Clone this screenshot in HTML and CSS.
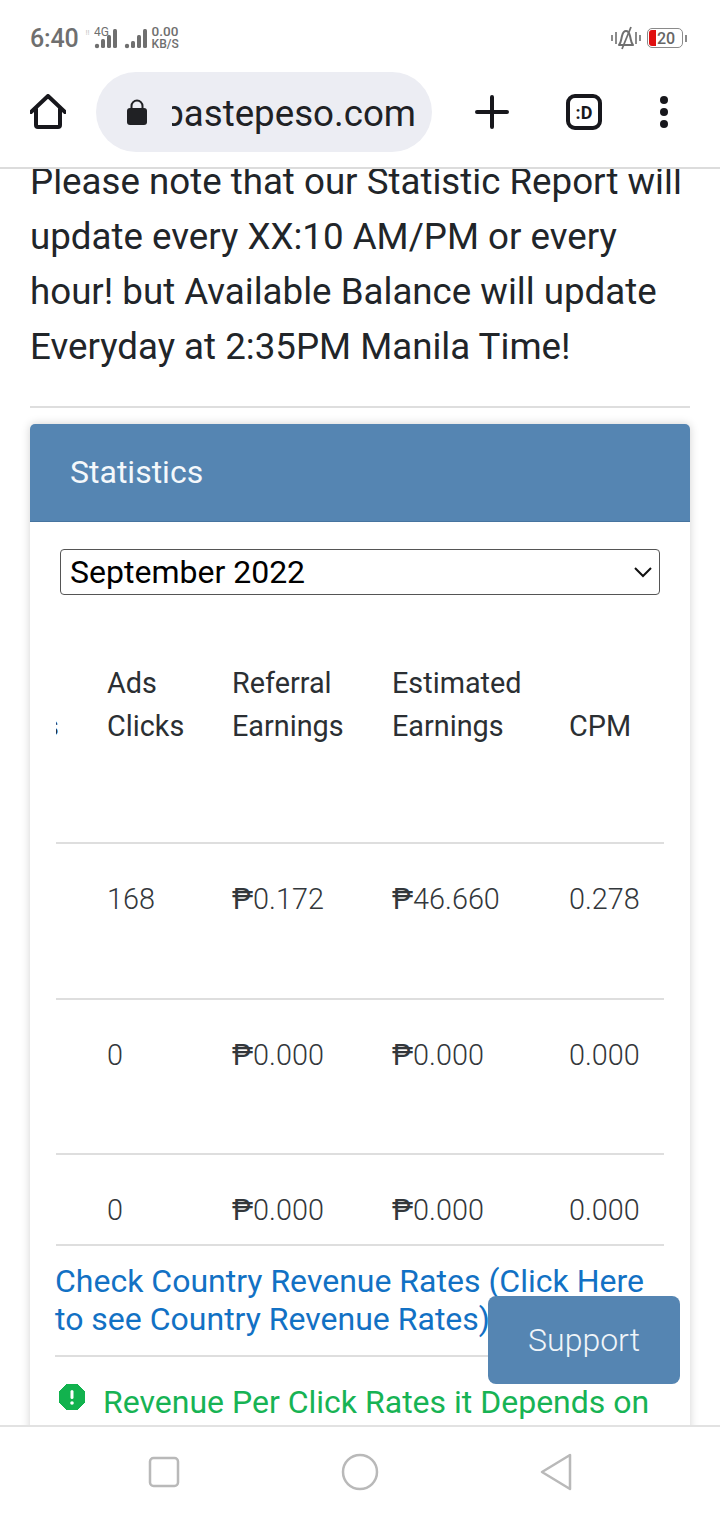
FILE: index.html
```html
<!DOCTYPE html>
<html lang="en">
<head>
<meta charset="UTF-8">
<title>Statistics</title>
<link rel="stylesheet" href="styles.css">
</head>
<body>
<div class="phone">
  <div class="status">
    <span class="time">6:40</span>
    <span class="volte">!!</span>
    <svg class="signal" width="55" height="24" viewBox="0 0 55 24">
      <text x="0" y="10" class="sig-label">4G</text>
      <g fill="#6f6f6f">
        <circle cx="3" cy="20" r="2.2"/>
        <rect x="7" y="13" width="4" height="9" rx="1.5"/>
        <rect x="13" y="9" width="4" height="13" rx="1.5"/>
        <rect x="19" y="3" width="4" height="19" rx="1.5"/>
        <circle cx="33" cy="20" r="2.2"/>
        <rect x="37" y="15" width="4" height="7" rx="1.5"/>
        <rect x="43" y="9" width="4" height="13" rx="1.5"/>
        <rect x="49" y="3" width="4" height="19" rx="1.5"/>
      </g>
    </svg>
    <span class="speed"><span>0.00</span><span class="speed-unit">KB/S</span></span>
    <span class="status-right">
      <svg width="30" height="24" viewBox="0 0 30 24" fill="none" stroke="#6f6f6f" stroke-width="2">
        <path d="M1 9v6M5 6v12M25 6v12M29 9v6" stroke-width="1.6"/>
        <path d="M8 19c2-2 2-5 3-9 .7-3 2.500-5 4-5s3.300 2 4 5c1 4 1 7 3 9z" stroke-linejoin="round"/>
        <path d="M20 1L11 23" stroke-width="1.8"/>
      </svg>
      <span class="battery"><span class="battery-fill"></span><span class="battery-num">20</span></span>
      <span class="battery-tip"></span>
    </span>
  </div>

  <div class="toolbar">
    <svg class="home" width="36" height="36" viewBox="0 0 36 36" fill="none" stroke="#17171c" stroke-width="4" stroke-linecap="round" stroke-linejoin="round">
      <path d="M1 18L18 2l17 16"/>
      <path d="M6 15v16a2 2 0 0 0 2 2h20a2 2 0 0 0 2-2V15"/>
    </svg>
    <div class="omnibox">
      <svg width="22" height="26" viewBox="0 0 22 26">
        <path d="M5.500 10V7a5.500 5.500 0 0 1 11 0v3" fill="none" stroke="#202124" stroke-width="2"/>
        <rect x="1" y="9" width="20" height="17" rx="3" fill="#202124"/>
      </svg>
      <div class="url"><span>pastepeso.com</span></div>
    </div>
    <svg class="plus" width="34" height="34" viewBox="0 0 34 34" stroke="#17171c" stroke-width="4" stroke-linecap="round">
      <path d="M17 2v30M2 17h30"/>
    </svg>
    <span class="tab-count">:D</span>
    <span class="dots"><i></i><i></i><i></i></span>
  </div>

  <main class="page">
    <p class="note">Please note that our Statistic Report will update every XX:10 AM/PM or every hour! but Available Balance will update Everyday at 2:35PM Manila Time!</p>
    <hr class="rule">
    <section class="card">
      <h2 class="card-head">Statistics</h2>
      <div class="card-body">
        <div class="month-box">
          <select class="month"><option>September 2022</option></select>
          <svg class="chevron" width="18" height="11" viewBox="0 0 18 11" fill="none" stroke="#111" stroke-width="2"><path d="M1 1l8 8 8-8"/></svg>
        </div>
        <div class="table-wrap">
          <table class="stats">
            <thead>
              <tr><th class="c0">Views</th><th class="c1">Ads Clicks</th><th class="c2">Referral Earnings</th><th class="c3">Estimated Earnings</th><th>CPM</th></tr>
            </thead>
            <tbody>
              <tr><td class="c0"></td><td>168</td><td><b>₱</b>0.172</td><td><b>₱</b>46.660</td><td>0.278</td></tr>
              <tr><td class="c0"></td><td>0</td><td><b>₱</b>0.000</td><td><b>₱</b>0.000</td><td>0.000</td></tr>
              <tr><td class="c0"></td><td>0</td><td><b>₱</b>0.000</td><td><b>₱</b>0.000</td><td>0.000</td></tr>
            </tbody>
          </table>
        </div>
        <a class="rates" href="#">Check Country Revenue Rates (Click Here to see Country Revenue Rates)</a>
        <div class="alert">
          <svg width="26" height="26" viewBox="0 0 26 26">
            <path d="M8 0h10l8 8v10l-8 8H8l-8-8V8z" fill="#12b24e" stroke="#12b24e" stroke-linejoin="round"/>
            <rect x="11.500" y="6" width="3" height="9" rx="1.500" fill="#fff"/>
            <circle cx="13" cy="19" r="1.800" fill="#fff"/>
          </svg>
          <span>Revenue Per Click Rates it Depends on</span>
        </div>
      </div>
    </section>
    <button class="support">Support</button>
  </main>

  <nav class="navbar">
    <svg width="32" height="32" viewBox="0 0 32 32" fill="none" stroke="#b9b9b9" stroke-width="2.500"><rect x="2" y="2" width="28" height="28" rx="3.500"/></svg>
    <svg width="38" height="38" viewBox="0 0 38 38" fill="none" stroke="#b9b9b9" stroke-width="2.500"><circle cx="19" cy="19" r="17"/></svg>
    <svg width="32" height="38" viewBox="0 0 32 38" fill="none" stroke="#b9b9b9" stroke-width="2.500" stroke-linejoin="round"><path d="M30 2v34L2 19z"/></svg>
  </nav>
</div>
</body>
</html>
```

FILE: styles.css
```css
* { box-sizing: border-box; }
html, body { margin: 0; padding: 0; }
body { font-family: Roboto, "Liberation Sans", sans-serif; background: #fff; color: #212529; }

.phone { width: 720px; height: 1520px; display: flex; flex-direction: column; overflow: hidden; }

/* status bar */
.status { height: 72px; flex: none; display: flex; align-items: center; padding: 4px 33px 0 30px; color: #6f6f6f; }
.time { font-size: 25px; font-weight: 500; letter-spacing: -0.2px; }
.volte { font-size: 8px; margin: 0 4px 12px 7px; color: #c4c4c4; }
.signal { flex: none; }
.sig-label { font: 12px Roboto, sans-serif; fill: #6f6f6f; }
.speed { display: flex; flex-direction: column; font-size: 13.500px; line-height: 13px; margin-left: 3px; font-weight: 500; }
.speed-unit { font-size: 12px; }
.status-right { margin-left: auto; display: flex; align-items: center; gap: 6px; }
.battery { width: 36px; height: 20px; border: 1px solid #8a8a8a; border-radius: 5px; display: flex; align-items: center; padding-left: 1px; margin-right: -4px; }
.battery-fill { width: 7px; height: 16px; background: #e01010; border-radius: 3px 0 0 3px; }
.battery-num { font-size: 16px; font-weight: 500; margin-left: 1px; color: #666; }
.battery-tip { width: 2px; height: 7px; background: #8a8a8a; }

/* browser toolbar */
.toolbar { height: 97px; flex: none; display: flex; align-items: flex-start; border-bottom: 2px solid #dcdcdc; position: relative; z-index: 2; background: #fff; }
.home { margin: 22px 0 0 30px; flex: none; }
.omnibox { width: 336px; height: 80px; margin-left: 30px; flex: none; background: #ecedf3; border-radius: 40px; display: flex; align-items: center; padding-left: 30px; }
.url { width: 244px; margin: 2px 0 0 24px; overflow: hidden; display: flex; justify-content: flex-end; font-size: 36.700px; color: #202124; white-space: nowrap; }
.url span { flex: none; }
.plus { margin: 23px 0 0 43px; flex: none; }
.tab-count { width: 36px; height: 36px; margin: 22px 0 0 57px; flex: none; border: 4px solid #17171c; border-radius: 9px; display: flex; align-items: center; justify-content: center; font-size: 18px; font-weight: 700; color: #17171c; }
.dots { margin: 24px 0 0 58px; display: flex; flex-direction: column; gap: 4px; flex: none; }
.dots i { width: 8px; height: 8px; border-radius: 50%; background: #17171c; display: block; }

/* page */
.page { flex: 1; min-height: 0; overflow: hidden; position: relative; padding: 0 30px; }
.note { margin: -15px 0 0; font-size: 36.700px; line-height: 55px; }
.rule { margin: 32px 0 16px; border: 0; border-top: 2px solid #dedede; }
.card { box-shadow: 0 0 10px rgba(0, 0, 0, .18); border-radius: 5px 5px 0 0; background: #fff; }
.card-head { margin: 0; height: 98px; padding: 0 0 2px 40px; display: flex; align-items: center; font-size: 32px; font-weight: 400; color: #f4f8fb; background: #5585b2; border-bottom: 1px solid #47749f; border-radius: 5px 5px 0 0; }
.card-body { padding: 27px 26px 30px; }
.month-box { position: relative; margin-left: 4px; width: 600px; }
.month { display: block; width: 600px; height: 46px; padding-left: 9px; font: 32px Roboto, sans-serif; color: #000; background: #fff; border: 1px solid #555; border-radius: 4px; appearance: none; }
.chevron { position: absolute; right: 8px; top: 18px; }

.table-wrap { height: 651px; overflow: hidden; border-bottom: 2px solid #dedede; }
.stats { border-collapse: collapse; margin-left: -100px; table-layout: fixed; width: 778px; font-size: 28.800px; }
.stats th { font-weight: 400; text-align: left; vertical-align: bottom; line-height: 43px; padding: 67px 0 94px; border-bottom: 2px solid #dedede; color: #2b2f33; }
.stats td { font-weight: 300; line-height: 43px; padding: 34px 0 76.500px; border-bottom: 2px solid #dedede; color: #33373b; }
.stats b { font-weight: 400; }
.stats .c0 { width: 151px; padding-right: 48px; text-align: right; }
.stats .c1 { width: 125px; }
.stats .c2 { width: 160px; }
.stats .c3 { width: 177px; }

.rates { display: block; margin-left: -1px; padding: 16px 0 17px; font-size: 32px; line-height: 38px; color: #1271c4; text-decoration: none; border-bottom: 2px solid #dedede; }
.alert { display: flex; align-items: flex-start; gap: 18px; padding: 27px 0 0 3px; font-size: 32px; line-height: 38px; color: #17b354; white-space: nowrap; }
.alert svg { flex: none; }
.alert span { margin-top: -1px; }

.support { position: absolute; left: 488px; top: 1127px; width: 192px; height: 88px; padding: 0; border: 0; border-radius: 8px; background: #5585b2; color: #f0f5f9; font: 300 32px Roboto, sans-serif; }

/* nav bar */
.navbar { height: 95px; flex: none; display: flex; align-items: center; justify-content: space-between; padding: 0 148px 3px; border-top: 2px solid #e2e2e2; background: #fff; position: relative; }
```
